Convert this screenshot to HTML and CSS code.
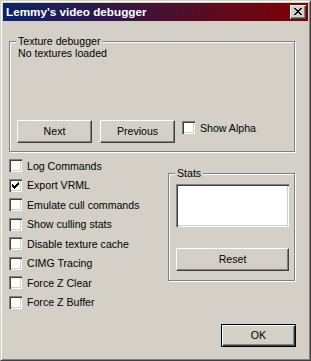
FILE: index.html
```html
<!DOCTYPE html>
<html>
<head>
<meta charset="utf-8">
<link rel="stylesheet" href="styles.css">
</head>
<body>
<div class="window">
  <div class="titlebar">
    <span class="title">Lemmy's video debugger</span>
    <span class="close">
      <svg width="8" height="7" viewBox="0 0 8 7" shape-rendering="crispEdges">
        <path d="M0 0h2v1h-2zM6 0h2v1h-2zM1 1h2v1h-2zM5 1h2v1h-2zM2 2h4v1h-4zM3 3h2v1h-2zM2 4h4v1h-4zM1 5h2v1h-2zM5 5h2v1h-2zM0 6h2v1h-2zM6 6h2v1h-2z" fill="#000"/>
      </svg>
    </span>
  </div>
  <div class="client">
    <fieldset class="group texture">
      <legend class="caption">Texture debugger</legend>
      <div class="tex-body">
        <div class="status">No textures loaded</div>
        <div class="btn-row">
          <button class="btn">Next</button>
          <button class="btn">Previous</button>
          <label class="check alpha"><span class="box"></span>Show Alpha</label>
        </div>
      </div>
    </fieldset>
    <div class="lower">
      <div class="checks">
        <label class="check"><span class="box"></span>Log Commands</label>
        <label class="check"><span class="box checked"><svg width="7" height="7" viewBox="0 0 7 7" shape-rendering="crispEdges"><path d="M0 2h1v3h-1zM1 3h1v3h-1zM2 4h1v3h-1zM3 3h1v3h-1zM4 2h1v3h-1zM5 1h1v3h-1zM6 0h1v3h-1z" fill="#000"/></svg></span>Export VRML</label>
        <label class="check"><span class="box"></span>Emulate cull commands</label>
        <label class="check"><span class="box"></span>Show culling stats</label>
        <label class="check"><span class="box"></span>Disable texture cache</label>
        <label class="check"><span class="box"></span>CIMG Tracing</label>
        <label class="check"><span class="box"></span>Force Z Clear</label>
        <label class="check"><span class="box"></span>Force Z Buffer</label>
      </div>
      <div class="side">
        <fieldset class="group stats">
          <legend class="caption">Stats</legend>
          <div class="stats-box"></div>
          <button class="btn reset">Reset</button>
        </fieldset>
        <button class="btn ok">OK</button>
      </div>
    </div>
  </div>
</div>
</body>
</html>
```
FILE: styles.css
```css
html, body {
  margin: 0;
  padding: 0;
  background: #d4d0c8;
}
body {
  font-family: "Liberation Sans", Arial, sans-serif;
  font-size: 10.6px;
  color: #000;
}
.window {
  box-sizing: border-box;
  width: 311px;
  height: 361px;
  background: #d4d0c8;
  border: 1px solid;
  border-color: #d4d0c8 #404040 #404040 #d4d0c8;
  box-shadow: inset 1px 1px #fff, inset -1px -1px #808080;
  padding: 2px;
  display: flex;
  flex-direction: column;
}
.titlebar {
  height: 18px;
  background: linear-gradient(90deg, #0a246a, #800000);
  display: flex;
  align-items: center;
  justify-content: space-between;
  padding: 0 2px 0 3px;
  flex: none;
}
.title {
  color: #fff;
  font-weight: bold;
  font-size: 11.7px;
  line-height: 18px;
  white-space: nowrap;
}
.close {
  box-sizing: border-box;
  width: 16px;
  height: 14px;
  background: #d4d0c8;
  box-shadow: inset 1px 1px #fff, inset -1px -1px #404040, inset -2px -2px #808080;
  display: flex;
  align-items: center;
  justify-content: center;
  padding-bottom: 1px;
}
.close svg { display: block; }
.client {
  flex: 1;
  display: flex;
  flex-direction: column;
  padding: 0 12px 11px 6px;
}
.group {
  margin: 0;
  border: 1px solid #808080;
  box-shadow: inset 1px 1px #fff, 1px 1px #fff;
  min-width: 0;
}
.caption {
  padding: 0 2px;
  margin-left: -1px;
  line-height: 13px;
  background: #d4d0c8;
}
.texture {
  box-sizing: border-box;
  width: 286px;
  margin-top: 14px;
  padding: 0 8px 8px 7px;
}
.tex-body {
  height: 95px;
  display: flex;
  flex-direction: column;
}
.status {
  line-height: 13px;
  margin-top: -1px;
  margin-left: 1px;
}
.btn-row {
  margin-top: auto;
  display: flex;
  align-items: flex-start;
}
.btn {
  box-sizing: border-box;
  width: 75px;
  height: 23px;
  font: inherit;
  color: #000;
  background: #d4d0c8;
  border: 1px solid;
  border-color: #fff #404040 #404040 #fff;
  box-shadow: inset -1px -1px #808080;
  padding: 0 0 1px;
  margin: 0;
}
.btn + .btn { margin-left: 8px; }
.check {
  display: flex;
  align-items: center;
  gap: 5px;
  height: 13px;
  white-space: nowrap;
}
.box {
  box-sizing: border-box;
  width: 13px;
  height: 13px;
  flex: none;
  background: #fff;
  box-shadow: inset 1px 1px #808080, inset 2px 2px #404040, inset -1px -1px #fff, inset -2px -2px #d4d0c8;
  display: flex;
  align-items: center;
  justify-content: center;
}
.box svg { display: block; }
.alpha {
  margin-left: 7px;
  margin-top: 1px;
}
.lower {
  flex: 1;
  display: flex;
  justify-content: space-between;
}
.checks {
  margin-top: 7px;
  display: flex;
  flex-direction: column;
  gap: 6.5px;
}
.side {
  width: 128px;
  display: flex;
  flex-direction: column;
  align-items: flex-end;
  margin-top: 15px;
}
.stats {
  box-sizing: border-box;
  width: 127px;
  align-self: flex-start;
  padding: 0 5px 9px 7px;
}
.stats-box {
  box-sizing: border-box;
  width: 113px;
  height: 43px;
  margin-top: 4px;
  background: #fff;
  box-shadow: inset 1px 1px #808080, inset 2px 2px #404040, inset -1px -1px #fff, inset -2px -2px #d4d0c8;
}
.reset {
  display: block;
  width: 113px;
  margin-top: 21px;
}
.ok {
  margin-top: auto;
  border: 1px solid #000;
  box-shadow: inset 1px 1px #fff, inset -1px -1px #404040, inset -2px -2px #808080;
}
```
